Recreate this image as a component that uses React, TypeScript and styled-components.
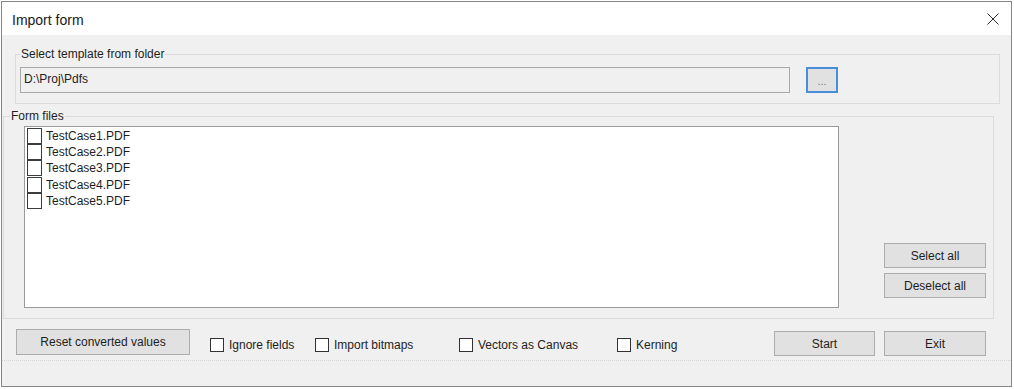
import styled, { createGlobalStyle } from "styled-components";

const GlobalStyle = createGlobalStyle`
  html, body {
    margin: 0;
    padding: 0;
    background: #ffffff;
  }
  body {
    font-family: "Liberation Sans", Arial, sans-serif;
    font-size: 12px;
    color: #1e1e1e;
  }
`;

const files = [
  "TestCase1.PDF",
  "TestCase2.PDF",
  "TestCase3.PDF",
  "TestCase4.PDF",
  "TestCase5.PDF",
];

const options = [
  { label: "Ignore fields", width: 105 },
  { label: "Import bitmaps", width: 144 },
  { label: "Vectors as Canvas", width: 158 },
  { label: "Kerning", width: 157 },
];

const App = () => {
  return (
    <>
      <GlobalStyle />
      <Window>
        <TitleBar>
          <Title>Import form</Title>
          <CloseButton>
            <svg width="12" height="12" viewBox="0 0 12 12">
              <path d="M0.5 0.5 L11.5 11.5 M11.5 0.5 L0.5 11.5" stroke="#2b2b2b" strokeWidth="1" fill="none" />
            </svg>
          </CloseButton>
        </TitleBar>

        <TemplateGroup>
          <GroupLabel $left={4}>Select template from folder</GroupLabel>
          <PathField>D:\Proj\Pdfs</PathField>
          <BrowseButton>...</BrowseButton>
        </TemplateGroup>

        <FilesGroup>
          <GroupLabel $left={6}>Form files</GroupLabel>
          <FileList>
            {files.map((name) => (
              <FileRow key={name}>
                <ListCheck />
                <FileName>{name}</FileName>
              </FileRow>
            ))}
          </FileList>
          <SideButtons>
            <Button $w={102}>Select all</Button>
            <Button $w={102}>Deselect all</Button>
          </SideButtons>
        </FilesGroup>

        <ActionBar>
          <Button $w={174} $h={26} $top={10}>
            Reset converted values
          </Button>
          <Options>
            {options.map((o) => (
              <Option key={o.label} $w={o.width}>
                <CheckBox />
                <span>{o.label}</span>
              </Option>
            ))}
          </Options>
          <Button $w={101} $top={12}>
            Start
          </Button>
          <Button $w={102} $top={12} $left={9}>
            Exit
          </Button>
        </ActionBar>

        <StatusBar />
      </Window>
    </>
  );
};
export default App;

const Window = styled.div`
  box-sizing: border-box;
  margin: 1px 0 0 1px;
  width: 1011px;
  height: 386px;
  border: 1px solid #858585;
  background: #f0f0f0;
  display: flex;
  flex-direction: column;
`;

const TitleBar = styled.div`
  height: 33px;
  background: #ffffff;
  display: flex;
  align-items: center;
  justify-content: space-between;
  padding: 0 12px 0 10px;
`;

const Title = styled.span`
  font-size: 14px;
  color: #1a1a1a;
  margin-top: 3px;
`;

const CloseButton = styled.div`
  display: flex;
  align-items: center;
  margin-top: 1px;
`;

const Group = styled.div`
  position: relative;
  box-sizing: border-box;
  border: 1px solid #dcdcdc;
  display: flex;
`;

const GroupLabel = styled.span<{ $left: number }>`
  position: absolute;
  top: -8px;
  left: ${(p) => p.$left}px;
  padding: 0 1px;
  line-height: 14px;
  background: #f0f0f0;
`;

const TemplateGroup = styled(Group)`
  margin: 19px 11px 0 13px;
  height: 50px;
  padding: 12px 0 0 4px;
  align-items: flex-start;
`;

const PathField = styled.div`
  box-sizing: border-box;
  width: 770px;
  height: 26px;
  border: 1px solid #a9a9a9;
  background: #f0f0f0;
  padding-left: 3px;
  line-height: 22px;
`;

const BrowseButton = styled.div`
  box-sizing: border-box;
  margin-left: 16px;
  width: 32px;
  height: 26px;
  border: 2px solid #4a8fd6;
  background: #e1e1e1;
  color: #7a7a7a;
  font-size: 11px;
  text-align: center;
  line-height: 24px;
`;

const FilesGroup = styled(Group)`
  margin: 12px 17px 0 1px;
  height: 203px;
  padding: 9px 7px 0 20px;
  align-items: flex-start;
`;

const FileList = styled.div`
  box-sizing: border-box;
  width: 815px;
  height: 182px;
  background: #ffffff;
  border: 1px solid #9a9a9a;
  padding: 1px 0 0 2px;
`;

const FileRow = styled.div`
  display: flex;
  align-items: center;
  height: 16.2px;
`;

const ListCheck = styled.div`
  box-sizing: border-box;
  width: 15px;
  height: 16px;
  border: 1px solid #3c3c3c;
  background: #fff;
  flex: none;
`;

const FileName = styled.span`
  margin-left: 4px;
  line-height: 14px;
`;

const SideButtons = styled.div`
  margin-left: auto;
  align-self: flex-end;
  margin-bottom: 20px;
  display: flex;
  flex-direction: column;
  gap: 5px;
`;

const Button = styled.div<{ $w: number; $h?: number; $top?: number; $left?: number }>`
  box-sizing: border-box;
  width: ${(p) => p.$w}px;
  height: ${(p) => p.$h ?? 25}px;
  margin-top: ${(p) => p.$top ?? 0}px;
  margin-left: ${(p) => p.$left ?? 0}px;
  border: 1px solid #adadad;
  background: #e1e1e1;
  display: flex;
  align-items: center;
  justify-content: center;
  flex: none;
`;

const ActionBar = styled.div`
  height: 41px;
  display: flex;
  align-items: flex-start;
  padding-left: 14px;
`;

const Options = styled.div`
  display: flex;
  margin-left: 20px;
  margin-top: 19px;
`;

const Option = styled.div<{ $w: number }>`
  width: ${(p) => p.$w}px;
  display: flex;
  align-items: center;
  gap: 5px;
  height: 14px;
`;

const CheckBox = styled.div`
  box-sizing: border-box;
  width: 14px;
  height: 14px;
  border: 1px solid #333;
  background: #fff;
  flex: none;
`;

const StatusBar = styled.div`
  flex: 1;
  border-top: 1px dotted #d6d6d6;
`;
